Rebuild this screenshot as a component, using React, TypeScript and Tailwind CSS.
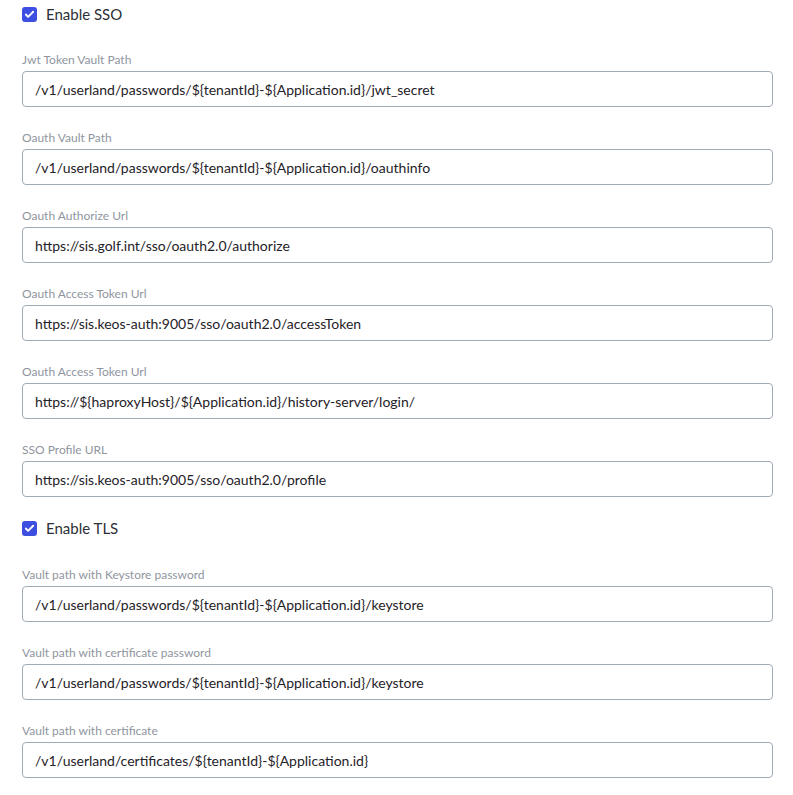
import { Check } from "lucide-react"

type Field = { label: string; value: string }

const ssoFields: Field[] = [
  { label: "Jwt Token Vault Path", value: "/v1/userland/passwords/${tenantId}-${Application.id}/jwt_secret" },
  { label: "Oauth Vault Path", value: "/v1/userland/passwords/${tenantId}-${Application.id}/oauthinfo" },
  { label: "Oauth Authorize Url", value: "https://sis.golf.int/sso/oauth2.0/authorize" },
  { label: "Oauth Access Token Url", value: "https://sis.keos-auth:9005/sso/oauth2.0/accessToken" },
  { label: "Oauth Access Token Url", value: "https://${haproxyHost}/${Application.id}/history-server/login/" },
  { label: "SSO Profile URL", value: "https://sis.keos-auth:9005/sso/oauth2.0/profile" },
]

const tlsFields: Field[] = [
  { label: "Vault path with Keystore password", value: "/v1/userland/passwords/${tenantId}-${Application.id}/keystore" },
  { label: "Vault path with certificate password", value: "/v1/userland/passwords/${tenantId}-${Application.id}/keystore" },
  { label: "Vault path with certificate", value: "/v1/userland/certificates/${tenantId}-${Application.id}" },
]

function CheckRow({ label }: { label: string }) {
  return (
    <label className="flex h-7 items-center gap-[9px]">
      <span className="flex h-[15px] w-[15px] items-center justify-center rounded-[3px] bg-[#3d4fe0]">
        <Check className="h-[11px] w-[11px] text-white" strokeWidth={4} />
      </span>
      <span className="text-[15px] text-[#2c2f36]">{label}</span>
    </label>
  )
}

function TextField({ field }: { field: Field }) {
  return (
    <div className="flex flex-col">
      <span className="text-[12px] leading-[14px] text-[#8f959e]">{field.label}</span>
      <input
        readOnly
        value={field.value}
        className="mt-1 h-9 w-full rounded-[4px] border border-[#a1abb7] bg-white px-3 text-[14px] text-[#1f2228] outline-none"
        style={{ fontFamily: "inherit" }}
      />
    </div>
  )
}

export default function App() {
  return (
    <div className="min-h-[795px] bg-white pl-[22px] pr-[20px] font-['Lato',sans-serif]">
      <CheckRow label="Enable SSO" />
      <div className="mt-[25px] flex flex-col gap-6">
        {ssoFields.map((f, i) => (
          <TextField key={i} field={f} />
        ))}
      </div>
      <div className="mt-[17px]">
        <CheckRow label="Enable TLS" />
      </div>
      <div className="mt-[26px] flex flex-col gap-6">
        {tlsFields.map((f, i) => (
          <TextField key={i} field={f} />
        ))}
      </div>
    </div>
  )
}
